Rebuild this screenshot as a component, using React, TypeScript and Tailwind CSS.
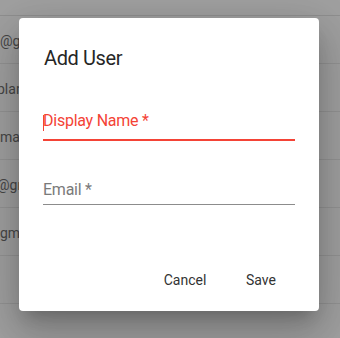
import React from "react";

const rows = [
  { text: "@gmail.com", cls: "ml-0" },
  { text: "planet@gmail.com", cls: "ml-[-3px]" },
  { text: "mail.com", cls: "ml-0" },
  { text: "@gmail.com", cls: "ml-[-3px]" },
  { text: "gmail.com", cls: "ml-0" },
  { text: "", cls: "ml-0" },
];

export default function App() {
  return (
    <div
      className="relative w-[340px] h-[338px] overflow-hidden bg-[#a0a0a0]"
      style={{ fontFamily: "Roboto, 'Liberation Sans', sans-serif" }}
    >
      <div className="flex flex-col">
        <div className="h-[16px] border-b border-[#8f8f8f]" />
        {rows.map((r, i) => (
          <div
            key={i}
            className="h-[48px] border-b border-[#939393] flex items-center pt-[3px] text-[14px] text-[#474747] whitespace-nowrap"
          >
            <span className={r.cls}>{r.text}</span>
          </div>
        ))}
      </div>

      <div className="absolute left-[19px] top-[18px] w-[300px] h-[293px] bg-white rounded-[4px] shadow-[0px_11px_15px_-7px_rgba(0,0,0,0.2),0px_24px_38px_3px_rgba(0,0,0,0.14),0px_9px_46px_8px_rgba(0,0,0,0.12)] flex flex-col">
        <div className="pt-[24px] pl-[25px] pr-[24px] text-[20px] leading-[32px] tracking-[-0.4px] text-[#262626]">
          Add User
        </div>
        <div className="px-[24px] mt-[37px]">
          <div className="relative text-[16px] leading-[20px] tracking-[-0.25px] text-[#f44336]">
            Display Name *
            <span className="absolute left-0 top-[4px] w-[1px] h-[16px] bg-[#f44336]" />
          </div>
          <div className="mt-[8px] h-[2px] w-[252px] bg-[#f44336]" />
        </div>
        <div className="px-[24px] mt-[39px]">
          <div className="text-[16px] leading-[20px] tracking-[-0.25px] text-[#7a7a7a]">Email *</div>
          <div className="mt-[4px] h-[1px] w-[252px] bg-[#8c8c8c]" />
        </div>
        <div className="mt-auto mb-[21px] flex justify-end gap-[12px] pr-[26px]">
          <button className="w-[64px] text-center text-[14px] leading-[20px] text-[#333333]">
            Cancel
          </button>
          <button className="w-[64px] text-center text-[14px] leading-[20px] text-[#333333]">
            Save
          </button>
        </div>
      </div>
    </div>
  );
}
